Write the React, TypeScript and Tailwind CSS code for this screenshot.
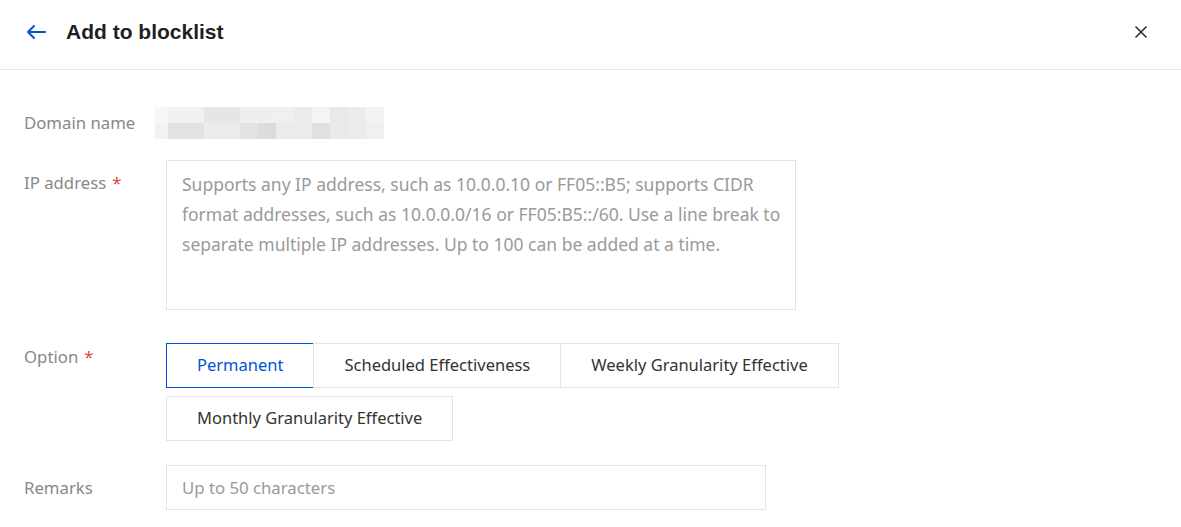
import { X } from "lucide-react";

const blur = [
  ["#f7f7f7", "#f1f1f1", "#f1f1f1", "#e6e6e6", "#e6e6e6", "#efefef", "#efefef", "#f0f0f0", "#ececec", "#f4f4f4", "#e9e9e9", "#ececec", "#f3f3f3"],
  ["#f2f2f2", "#e2e2e2", "#e2e2e2", "#ececec", "#ececec", "#e2e2e2", "#dcdcdc", "#ebebeb", "#ebebeb", "#e0e0e0", "#e9e9e9", "#ebebeb", "#f0f0f0"],
];
const blurW = [13, 18, 18, 18, 18, 18, 18, 18, 18, 18, 18, 18, 18];

const Label = ({ text, required }: { text: string; required?: boolean }) => (
  <div className="w-[142px] shrink-0 text-[16.75px] text-[#888]">
    {text}
    {required && <span className="ml-[6px] text-[#e54545]">*</span>}
  </div>
);

const options = ["Permanent", "Scheduled Effectiveness", "Weekly Granularity Effective", "Monthly Granularity Effective"];

export default function App() {
  return (
    <div className="h-[527px] w-[1181px] bg-white font-['Noto_Sans',sans-serif]">
      <div className="flex h-[70px] items-center justify-between border-b border-[#e7e7e7] pb-[6px] pl-[24px] pr-[30px]">
        <div className="flex items-center gap-[18px]">
          <svg width="24" height="24" viewBox="0 0 24 24" fill="none" stroke="#0052d9" strokeWidth="2" strokeLinecap="round" strokeLinejoin="round">
            <path d="M21 12H4M10 6l-6 6 6 6" />
          </svg>
          <h1 className="font-['Liberation_Sans',sans-serif] text-[21px] font-bold text-[#1f1f1f]">Add to blocklist</h1>
        </div>
        <X size={20} strokeWidth={2} className="text-[#333]" />
      </div>

      <div className="px-[24px] pt-[37px]">
        <div className="flex items-center">
          <Label text="Domain name" />
          <div className="ml-[-11px] flex flex-col">
            {blur.map((row, i) => (
              <div key={i} className="flex">
                {row.map((c, j) => (
                  <div key={j} className="h-[16px]" style={{ backgroundColor: c, width: blurW[j] }} />
                ))}
              </div>
            ))}
          </div>
        </div>

        <div className="mt-[21px] flex">
          <div className="pt-[10px]">
            <Label text="IP address" required />
          </div>
          <div className="h-[150px] w-[630px] border border-[#e3e4ea] py-[8px] pl-[15px] pr-[6px] text-[17.5px] leading-[30px] text-[#9a9a9a]">
            Supports any IP address, such as 10.0.0.10 or FF05::B5; supports CIDR format addresses, such as 10.0.0.0/16 or FF05:B5::/60. Use a line break to separate multiple IP addresses. Up to 100 can be added at a time.
          </div>
        </div>

        <div className="mt-[33px] flex">
          <div className="pt-[1px]">
            <Label text="Option" required />
          </div>
          <div className="flex w-[690px] flex-wrap gap-y-[8px]">
            {options.map((o, i) => (
              <div
                key={o}
                className={
                  i === 0
                    ? "flex h-[45px] items-center border border-[#0052d9] px-[30px] text-[16.5px] text-[#0052d9]"
                    : i === 3
                      ? "flex h-[45px] items-center border border-[#e3e4ea] px-[30px] text-[16.5px] text-[#333]"
                      : "ml-[-1px] flex h-[45px] items-center border border-[#e3e4ea] px-[30px] text-[16.5px] text-[#333]"
                }
              >
                {o}
              </div>
            ))}
          </div>
        </div>

        <div className="mt-[24px] flex items-center">
          <Label text="Remarks" />
          <div className="flex h-[45px] w-[600px] items-center border border-[#e3e4ea] px-[15px] text-[16.75px] text-[#9a9a9a]">
            Up to 50 characters
          </div>
        </div>
      </div>
    </div>
  );
}
